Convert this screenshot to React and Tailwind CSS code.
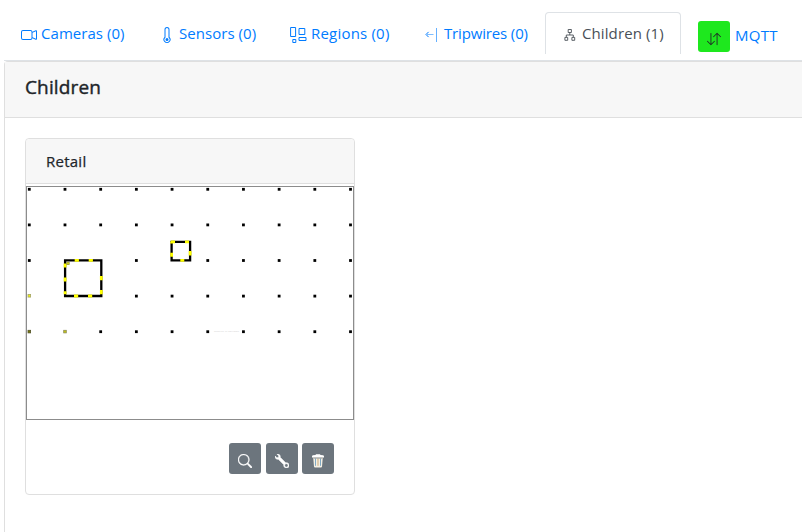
import { BsCameraVideo, BsThermometer, BsArrowDownUp, BsSearch, BsWrench } from "react-icons/bs";

const xs = Array.from({ length: 10 }, (_, i) => 2.3 + i * 35.69);
const ys = Array.from({ length: 5 }, (_, i) => 2.3 + i * 35.6);
const hidden = ["1-2", "2-2", "1-3", "2-3", "4-2", "0-3", "0-4", "1-4"];

function FloorMap() {
  return (
    <svg className="block" width="326" height="232" viewBox="0 0 326 232">
      {ys.map((y, r) =>
        xs.map((x, c) =>
          hidden.includes(`${c}-${r}`) ? null : (
            <rect key={`${c}-${r}`} x={x - 1.4} y={y - 1.4} width="2.8" height="2.8" fill="#000" />
          )
        )
      )}
      <rect x="1" y="107.5" width="2.6" height="2.6" fill="#eeee10" stroke="#a5a56a" strokeWidth=".8" />
      <rect x="1" y="143.3" width="2.6" height="2.6" fill="#77770a" stroke="#55552a" strokeWidth=".8" />
      <rect x="36.7" y="143.3" width="2.6" height="2.6" fill="#c5c510" stroke="#8a8a5a" strokeWidth=".8" />
      <g fill="none" strokeWidth="2.3">
        <path d="M38.1 73.3H74.3V109H38.1Z" stroke="#000" />
        <path
          stroke="#ff0"
          strokeWidth="2.8"
          d="M47.7 73.3h4.2M61.7 73.3h4.2M74.3 89v4.2M74.3 103v4.2M47 109h4.2M61 109h4.2M38.1 76.4v4.2M38.1 90.4v4.2M38.1 104.2v3"
        />
        <path d="M144.6 54.9H163.1V73.4H144.6Z" stroke="#000" />
        <path
          stroke="#ff0"
          strokeWidth="2.8"
          d="M144 54.9h4M158 54.9h4M163.1 64v4.5M153.3 73.4h4M144.6 65.7v4M144.6 54.5v2"
        />
      </g>
      <rect x="39.8" y="75.2" width="2.4" height="2.4" fill="#dddd10" stroke="#8f8f40" strokeWidth=".8" />
      <text x="187" y="145.3" fontSize="2.4" fill="#d0d0d0" textLength="25">negative fill polytown</text>
    </svg>
  );
}

function RegionsIcon() {
  return (
    <svg width="17" height="16" viewBox="0 0 17 16" fill="none" stroke="currentColor" strokeWidth="1">
      <path d="M.6 .5H5.6V9.5H.6Z" />
      <path d="M9 1.5H14.8V7.5H9Z" />
      <path d="M2.8 12.5H5.8V15.5H2.8Z" />
      <path d="M9 10.5H16V13.5H9Z" />
    </svg>
  );
}

function TripwireIcon() {
  return (
    <svg width="15" height="16" viewBox="0 0 15 16" fill="none" stroke="currentColor">
      <path d="M3 7.5H9.5" opacity=".5" />
      <path d="M4.6 4.9L2 7.5L4.6 10.1" strokeWidth="1" />
      <path d="M12.5 1V15" opacity=".6" />
    </svg>
  );
}

function ChildrenIcon() {
  return (
    <svg width="12" height="14" viewBox="0 0 12 14" fill="none" stroke="currentColor" strokeWidth=".9">
      <path d="M4.2 1.5H7.4V4.5H4.2ZM5.8 4.5V7M2.3 9V7H9.3V9" />
      <path d="M.9 9.4H3.7V12.3H.9ZM7.9 9.4H10.7V12.3H7.9Z" />
    </svg>
  );
}

function TrashIcon() {
  return (
    <svg width="14" height="14" viewBox="0 0 14 14">
      <path d="M1 2.2Q1 1 4.5 1L5 .3H9L9.5 1Q13 1 13 2.2V3.6H1Z" fill="#fff" />
      <path d="M2.2 3.6H11.8L11 12.6Q10.9 13.6 9.9 13.6H4.1Q3.1 13.6 3 12.6Z" fill="#f4f0e4" />
      <path d="M4.5 4.6V11.8M9.5 4.6V11.8" stroke="#7fa9c4" strokeWidth="1" />
      <path d="M7 4.6V11.8" stroke="#c9a878" strokeWidth="1" />
      <path d="M2.6 4.2H11.4" stroke="#6c757d" strokeWidth=".6" />
    </svg>
  );
}

function Tab({ icon, className, children }) {
  return (
    <a className={`flex h-[42px] shrink-0 items-center border border-transparent whitespace-nowrap text-[#007bff] ${className}`}>
      {icon}
      <span>{children}</span>
    </a>
  );
}

function ToolButton({ className, children }) {
  return (
    <button className={`flex h-[31px] w-8 items-center justify-center rounded-[3px] bg-[#6c757d] pt-1 text-white ${className}`}>
      {children}
    </button>
  );
}

export default function App() {
  return (
    <div className="h-[532px] w-[802px] overflow-hidden bg-white pl-1 pt-3 font-['Open_Sans','Noto_Sans',sans-serif] text-base text-[#212529]">
      <nav className="flex h-[49px] items-start border-b border-[#dee2e6] text-[15px]">
        <Tab className="w-[140px] gap-1 pl-4 tracking-[0.05px]" icon={<BsCameraVideo size={16} className="mt-[3px]" />}>Cameras (0)</Tab>
        <Tab className="w-[130px] gap-1 pl-[14px] tracking-[0.05px]" icon={<BsThermometer size={16} className="mt-[3px]" />}>Sensors (0)</Tab>
        <Tab className="w-[132px] gap-1 pl-[15px] tracking-[0.2px]" icon={<span className="mt-[3px]"><RegionsIcon /></span>}>Regions (0)</Tab>
        <Tab className="w-[139px] gap-[5px] pl-[17px] tracking-[-0.15px]" icon={<span className="mt-[3px]"><TripwireIcon /></span>}>Tripwires (0)</Tab>
        <a className="flex h-[42px] w-[136px] shrink-0 items-center gap-[6px] rounded-t border border-b-0 border-[#dee2e6] pl-[18px] tracking-[0.1px] whitespace-nowrap text-[#495057]">
          <span className="mt-[3px]"><ChildrenIcon /></span>
          <span>Children (1)</span>
        </a>
        <a className="ml-[17px] flex items-center gap-[5px] pt-[9px] text-[#007bff]">
          <span className="flex h-[31px] w-8 items-center justify-center rounded-[3px] bg-[#1ee81e] pt-1 text-[#212529]">
            <BsArrowDownUp size={14} />
          </span>
          <span className="pb-[3px] tracking-[0.3px]">MQTT</span>
        </a>
      </nav>
      <main className="h-[480px] rounded-tl border-l border-t border-[#dfdfdf]">
        <header className="flex h-14 items-center border-b border-[#dfdfdf] bg-[#f7f7f7] pb-1 pl-5">
          <h5 className="text-[19px] tracking-[0.15px] [-webkit-text-stroke:0.4px_#212529]">Children</h5>
        </header>
        <section className="ml-5 mt-5 h-[357px] w-[330px] rounded border border-[#dfdfdf]">
          <h6 className="flex h-[45px] items-center rounded-t border-b border-[#dfdfdf] bg-[#f7f7f7] pl-5 text-[15px] tracking-[0.25px] [-webkit-text-stroke:0.25px_#212529]">Retail</h6>
          <div className="mt-0.5 h-[234px] w-[328px] border border-[#8c8c8c]">
            <FloorMap />
          </div>
          <div className="flex justify-end pr-5 pt-[23px]">
            <ToolButton className="mr-[5px]"><BsSearch size={14} stroke="currentColor" strokeWidth=".4" /></ToolButton>
            <ToolButton className="mr-1"><BsWrench size={14} stroke="currentColor" strokeWidth=".7" /></ToolButton>
            <ToolButton><TrashIcon /></ToolButton>
          </div>
        </section>
      </main>
    </div>
  );
}
